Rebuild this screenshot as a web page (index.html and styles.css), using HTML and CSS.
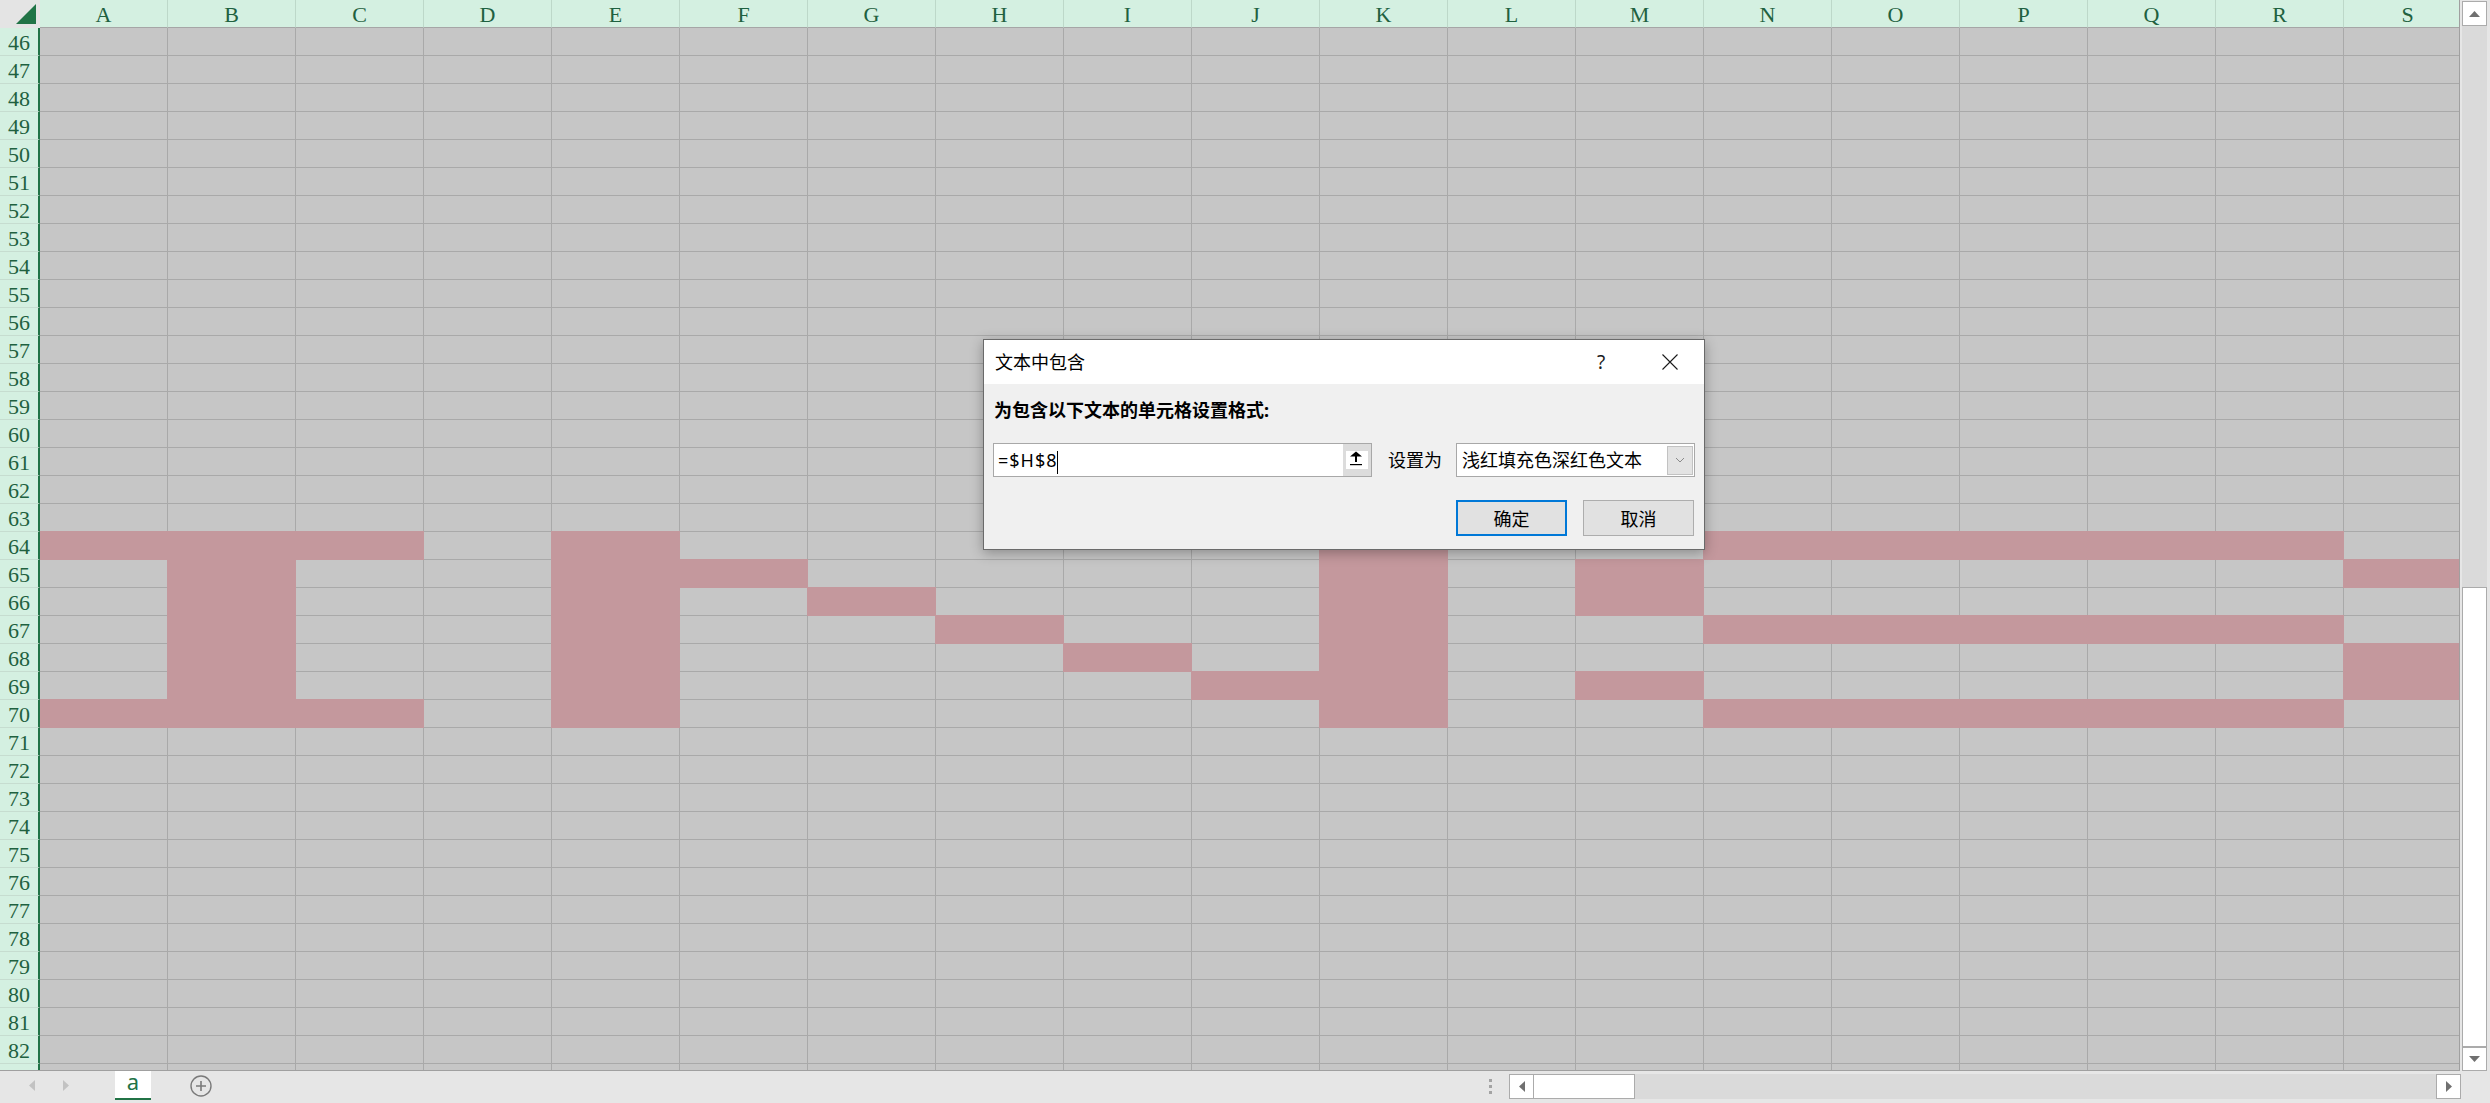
FILE: index.html
```html
<!DOCTYPE html>
<html lang="zh-CN">
<head>
<meta charset="utf-8">
<title>文本中包含</title>
<link rel="stylesheet" href="styles.css">
</head>
<body>
<div class="app">
  <div class="main">
    <div class="sheet">
      <div class="corner"><svg width="40" height="28" viewBox="0 0 40 28"><polygon points="16,24 36,24 36,4" fill="#217346"/></svg></div>
      <div class="ch">A</div><div class="ch">B</div><div class="ch">C</div><div class="ch">D</div><div class="ch">E</div><div class="ch">F</div><div class="ch">G</div><div class="ch">H</div><div class="ch">I</div><div class="ch">J</div><div class="ch">K</div><div class="ch">L</div><div class="ch">M</div><div class="ch">N</div><div class="ch">O</div><div class="ch">P</div><div class="ch">Q</div><div class="ch">R</div><div class="ch">S</div>
      <div class="rh">46</div><div class="rh">47</div><div class="rh">48</div><div class="rh">49</div><div class="rh">50</div><div class="rh">51</div><div class="rh">52</div><div class="rh">53</div><div class="rh">54</div><div class="rh">55</div>
      <div class="rh">56</div><div class="rh">57</div><div class="rh">58</div><div class="rh">59</div><div class="rh">60</div><div class="rh">61</div><div class="rh">62</div><div class="rh">63</div><div class="rh">64</div><div class="rh">65</div>
      <div class="rh">66</div><div class="rh">67</div><div class="rh">68</div><div class="rh">69</div><div class="rh">70</div><div class="rh">71</div><div class="rh">72</div><div class="rh">73</div><div class="rh">74</div><div class="rh">75</div>
      <div class="rh">76</div><div class="rh">77</div><div class="rh">78</div><div class="rh">79</div><div class="rh">80</div><div class="rh">81</div><div class="rh">82</div><div class="rh"></div>
      <div class="cells"></div>
      <div class="hl first-col b1"></div>
      <div class="hl first-col b2"></div>
      <div class="hl b3"></div>
      <div class="hl b4"></div>
      <div class="hl b5"></div>
      <div class="hl b6"></div>
      <div class="hl b7"></div>
      <div class="hl b8"></div>
      <div class="hl b9"></div>
      <div class="hl b10"></div>
      <div class="hl b11"></div>
      <div class="hl b12"></div>
      <div class="hl b13"></div>
      <div class="hl b14"></div>
      <div class="hl b15"></div>
      <div class="hl b16"></div>
      <div class="hl b17"></div>
    </div>
    <div class="vscroll">
      <div class="sb-btn vs-up"><svg width="11" height="6" viewBox="0 0 11 6"><polygon points="0,6 11,6 5.5,0" fill="#707070"/></svg></div>
      <div class="vs-gap"></div>
      <div class="vs-thumb"></div>
      <div class="sb-btn vs-down"><svg width="11" height="6" viewBox="0 0 11 6"><polygon points="0,0 11,0 5.5,6" fill="#707070"/></svg></div>
    </div>
  </div>
  <div class="tabbar">
    <span class="nav nav-prev"><svg width="6" height="11" viewBox="0 0 6 11"><polygon points="6,0 6,11 0,5.5" fill="#c2c2c2"/></svg></span>
    <span class="nav nav-next"><svg width="6" height="11" viewBox="0 0 6 11"><polygon points="0,0 0,11 6,5.5" fill="#c2c2c2"/></svg></span>
    <div class="sheet-tab">a</div>
    <span class="add-sheet"><svg width="22" height="22" viewBox="0 0 22 22"><circle cx="11" cy="11" r="10" fill="none" stroke="#7a7a7a" stroke-width="1.4"/><path d="M6 11H16M11 6V16" stroke="#7a7a7a" stroke-width="1.6"/></svg></span>
    <div class="spacer"></div>
    <div class="dots"><i></i><i></i><i></i></div>
    <div class="hscroll">
      <div class="sb-btn hs-left"><svg width="6" height="11" viewBox="0 0 6 11"><polygon points="6,0 6,11 0,5.5" fill="#707070"/></svg></div>
      <div class="hs-thumb"></div>
      <div class="hs-track"></div>
      <div class="sb-btn hs-right"><svg width="6" height="11" viewBox="0 0 6 11"><polygon points="0,0 0,11 6,5.5" fill="#707070"/></svg></div>
    </div>
  </div>

  <div class="dialog">
    <div class="dlg-title">
      <span class="dlg-caption">文本中包含</span>
      <span class="dlg-help">?</span>
      <span class="dlg-close"><svg width="16" height="16" viewBox="0 0 16 16"><path d="M0.5 0.5L15.5 15.5M15.5 0.5L0.5 15.5" stroke="#1a1a1a" stroke-width="1.1"/></svg></span>
    </div>
    <div class="dlg-body">
      <div class="dlg-label">为包含以下文本的单元格设置格式:</div>
      <div class="dlg-row">
        <div class="ref-input">
          <div class="ref-text">=$H$8<span class="caret"></span></div>
          <div class="ref-btn"><span class="ref-icon"><svg width="22" height="18" viewBox="0 0 22 18"><polygon points="4,5.5 16,5.5 10,0.5" fill="#000"/><rect x="9" y="5" width="2" height="6" fill="#000"/><rect x="4" y="13" width="12" height="1.2" fill="#000"/></svg></span></div>
        </div>
        <span class="set-as">设置为</span>
        <div class="combo">
          <span class="combo-text">浅红填充色深红色文本</span>
          <span class="combo-btn"><svg width="10" height="6" viewBox="0 0 10 6"><path d="M1 1L5 5L9 1" fill="none" stroke="#8a8a8a" stroke-width="1"/></svg></span>
        </div>
      </div>
      <div class="dlg-buttons">
        <button class="btn primary">确定</button>
        <button class="btn">取消</button>
      </div>
    </div>
  </div>
</div>
</body>
</html>
```

FILE: styles.css
```css
* { box-sizing: border-box; }
html, body { margin: 0; padding: 0; }
body {
  width: 2490px;
  height: 1103px;
  overflow: hidden;
  background: #e6e6e6;
  font-family: "Noto Sans", "Noto Sans CJK SC", sans-serif;
}
.app {
  position: relative;
  width: 2490px;
  height: 1103px;
  display: flex;
  flex-direction: column;
}
.main {
  display: flex;
  height: 1071px;
  flex: none;
}

/* ---------- sheet grid ---------- */
.sheet {
  width: 2460px;
  height: 1071px;
  flex: none;
  border-right: 1px solid #a0a0a0;
  border-bottom: 1px solid #a0a0a0;
  overflow: hidden;
  display: grid;
  grid-template-columns: 40px repeat(19, 128px);
  grid-template-rows: repeat(39, 28px);
  font-family: "Liberation Serif", "Times New Roman", serif;
}
.corner {
  grid-row: 1;
  grid-column: 1;
  background: #e4e4e4;
}
.corner svg { display: block; }
.ch {
  grid-row: 1;
  background: #d4f0e1;
  border-right: 1px solid #bdd8c9;
  border-bottom: 1px solid #a6a6a6;
  color: #1f6140;
  font-size: 22px;
  line-height: 24px;
  padding-top: 3px;
  text-align: center;
}
.rh {
  grid-column: 1;
  background: #d4f0e1;
  border-right: 2px solid #217346;
  border-bottom: 1px solid #c6ddd0;
  color: #1f6140;
  font-size: 22px;
  line-height: 25px;
  padding-top: 2px;
  text-align: center;
}
.cells {
  grid-column: 2 / -1;
  grid-row: 2 / -1;
  background-color: #c6c6c6;
  background-image:
    linear-gradient(to right, transparent 127px, #a9a9a9 127px),
    linear-gradient(to bottom, transparent 27px, #a9a9a9 27px);
  background-size: 128px 28px;
}
.hl {
  background: #c4989d;
  margin: -1px 0 0 -1px;
}
.hl.first-col { margin-left: 0; }
.b1  { grid-area: 20 / 2 / 21 / 5; }
.b2  { grid-area: 26 / 2 / 27 / 5; }
.b3  { grid-area: 21 / 3 / 26 / 4; }
.b4  { grid-area: 20 / 6 / 27 / 7; }
.b5  { grid-area: 21 / 7 / 22 / 8; }
.b6  { grid-area: 22 / 8 / 23 / 9; }
.b7  { grid-area: 23 / 9 / 24 / 10; }
.b8  { grid-area: 24 / 10 / 25 / 11; }
.b9  { grid-area: 25 / 11 / 26 / 12; }
.b10 { grid-area: 20 / 12 / 27 / 13; }
.b11 { grid-area: 20 / 15 / 21 / 20; }
.b12 { grid-area: 21 / 14 / 23 / 15; }
.b13 { grid-area: 23 / 15 / 24 / 20; }
.b14 { grid-area: 25 / 14 / 26 / 15; }
.b15 { grid-area: 26 / 15 / 27 / 20; }
.b16 { grid-area: 21 / 20 / 22 / 21; }
.b17 { grid-area: 24 / 20 / 26 / 21; }

/* ---------- scrollbars ---------- */
.sb-btn {
  background: #ffffff;
  border: 1px solid #ababab;
  display: flex;
  align-items: center;
  justify-content: center;
  flex: none;
}
.sb-btn svg { display: block; }
.vscroll {
  width: 30px;
  height: 1071px;
  flex: none;
  padding: 1px 3px 0 2px;
  background: #e6e6e6;
  display: flex;
  flex-direction: column;
}
.vs-up { height: 25px; }
.vs-gap { height: 561px; flex: none; background: #dadada; }
.vs-thumb {
  height: 460px;
  flex: none;
  background: #ffffff;
  border: 1px solid #ababab;
}
.vs-down { height: 24px; }

/* ---------- tab bar ---------- */
.tabbar {
  height: 32px;
  flex: none;
  display: flex;
  align-items: flex-start;
  background: #e6e6e6;
}
.nav { display: block; margin-top: 9px; }
.nav svg { display: block; }
.nav-prev { margin-left: 29px; }
.nav-next { margin-left: 28px; }
.sheet-tab {
  margin-left: 46px;
  width: 36px;
  height: 29px;
  background: #ffffff;
  border-bottom: 2px solid #217346;
  color: #217346;
  font-family: "Noto Sans", sans-serif;
  font-size: 22px;
  line-height: 21px;
  text-align: center;
}
.add-sheet { display: block; margin: 4px 0 0 39px; }
.add-sheet svg { display: block; }
.spacer { flex: 1; }
.dots {
  display: flex;
  flex-direction: column;
  gap: 3px;
  margin: 8px 17px 0 0;
}
.dots i {
  display: block;
  width: 3px;
  height: 3px;
  background: #a3a3a3;
}
.hscroll {
  width: 952px;
  height: 25px;
  margin: 3px 29px 0 0;
  background: #dadada;
  display: flex;
}
.hs-left { width: 25px; height: 25px; }
.hs-thumb {
  width: 102px;
  height: 25px;
  margin-left: -1px;
  background: #ffffff;
  border: 1px solid #ababab;
}
.hs-track { flex: 1; }
.hs-right { width: 25px; height: 25px; }

/* ---------- dialog ---------- */
.dialog {
  position: absolute;
  left: 983px;
  top: 339px;
  width: 722px;
  height: 211px;
  border: 1px solid #6a6a6a;
  background: #f0f0f0;
  box-shadow: 0 3px 12px rgba(0, 0, 0, 0.3);
  font-family: "Noto Sans", "Noto Sans CJK SC", sans-serif;
  color: #000;
}
.dlg-title {
  height: 44px;
  background: #ffffff;
  display: flex;
  align-items: center;
  padding: 0 26px 0 11px;
}
.dlg-caption {
  flex: 1;
  font-size: 18px;
  line-height: 44px;
}
.dlg-help {
  width: 20px;
  text-align: center;
  font-size: 19px;
  line-height: 44px;
  color: #1a1a1a;
  margin-right: 51px;
}
.dlg-close { display: block; width: 16px; height: 16px; }
.dlg-close svg { display: block; }
.dlg-body {
  padding: 14px 9px 13px 9px;
}
.dlg-label {
  font-size: 18px;
  font-weight: bold;
  line-height: 24px;
  padding-left: 1px;
}
.dlg-row {
  margin-top: 21px;
  height: 34px;
  display: flex;
  align-items: center;
}
.ref-input {
  width: 379px;
  height: 34px;
  border: 1px solid #a8a8a8;
  display: flex;
}
.ref-text {
  flex: 1;
  background: #ffffff;
  padding-left: 4px;
  font-size: 18px;
  letter-spacing: 1px;
  line-height: 32px;
  white-space: nowrap;
}
.caret {
  display: inline-block;
  width: 1px;
  height: 23px;
  background: #000;
  vertical-align: middle;
  margin-left: -1px;
}
.ref-btn {
  width: 28px;
  background: #dcdcdc;
  display: flex;
  align-items: center;
  justify-content: center;
}
.ref-icon {
  display: block;
  width: 22px;
  height: 18px;
  background: #ffffff;
}
.ref-icon svg { display: block; }
.set-as {
  margin-left: 16px;
  font-size: 18px;
  line-height: 24px;
}
.combo {
  margin-left: 14px;
  width: 239px;
  height: 34px;
  border: 1px solid #a8a8a8;
  background: #ffffff;
  display: flex;
  align-items: center;
}
.combo-text {
  padding-left: 5px;
  font-size: 18px;
  line-height: 24px;
  white-space: nowrap;
}
.combo-btn {
  margin-left: auto;
  margin-right: 1px;
  width: 26px;
  height: 29px;
  background: #e3e3e3;
  border: 1px solid #c2c2c2;
  display: flex;
  align-items: center;
  justify-content: center;
}
.combo-btn svg { display: block; }
.dlg-buttons {
  margin-top: 23px;
  display: flex;
  justify-content: flex-end;
  gap: 16px;
  padding-right: 1px;
}
.btn {
  width: 111px;
  height: 36px;
  margin: 0;
  padding: 0;
  background: #e1e1e1;
  border: 1px solid #adadad;
  font-family: "Noto Sans CJK SC", sans-serif;
  font-size: 18px;
  color: #000;
  line-height: 24px;
}
.btn.primary { border: 2px solid #0078d7; }
```
